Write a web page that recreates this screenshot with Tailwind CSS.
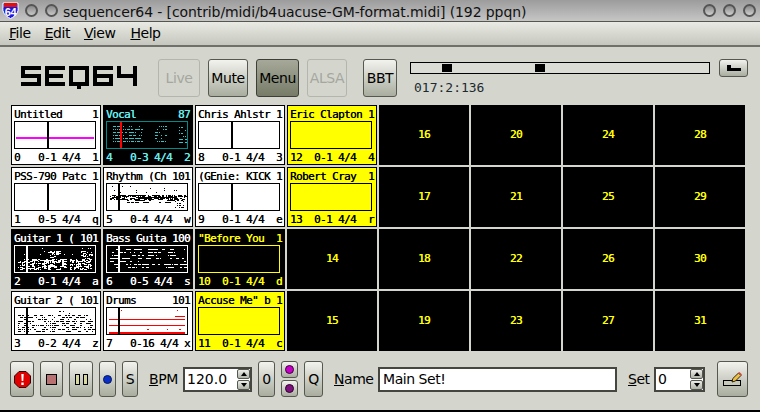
<!DOCTYPE html>
<html lang="en">
<head>
  <meta charset="UTF-8">
  <title>sequencer64</title>
  <script src="https://cdn.jsdelivr.net/npm/@tailwindcss/browser@4"></script>
</head>
<body class="bg-[#d4d6ce] font-['DejaVu_Sans',sans-serif] text-[14px] tracking-[-0.45px] text-black overflow-hidden">
  <div class="w-[760px] h-[412px] flex flex-col">

    <!-- title bar -->
    <div class="h-[22px] flex items-center bg-gradient-to-b from-[#9c9c9c] to-[#c6c6c6] border-b border-[#55574f] shrink-0">
      <svg class="ml-[2px] w-[17px] h-[17px]" viewBox="0 0 17 17">
        <path d="M1 1h15v4c1 5-2 9-7.500 11.500C3 14 0 10 1 5z" fill="#1a1ae0" stroke="#fff"/>
        <path d="M2 1h13v4H2z" fill="#e01010"/>
        <text x="8.500" y="14" text-anchor="middle" font-size="11" font-weight="bold" fill="#fff" font-family="Liberation Sans">64</text>
      </svg>
      <div class="ml-[6px] w-[13px] h-[13px] rounded-full border-2 border-[#555] bg-gradient-to-b from-[#8a8a8a] to-[#c8c8c8]"></div>
      <div class="ml-[7px] w-[13px] h-[13px] rounded-full border-2 border-[#555] bg-gradient-to-b from-[#8a8a8a] to-[#c8c8c8]"></div>
      <div class="ml-[5px] pt-[3px] text-[14px] tracking-[-0.1px] text-[#111] whitespace-pre">sequencer64 - [contrib/midi/b4uacuse-GM-format.midi] (192 ppqn)</div>
      <div class="ml-auto mr-[4px] flex gap-[7px]">
        <div class="w-[13px] h-[13px] rounded-full border-2 border-[#555] bg-gradient-to-b from-[#8a8a8a] to-[#d0d0d0]"></div>
        <div class="w-[13px] h-[13px] rounded-full border-2 border-[#555] bg-gradient-to-b from-[#8a8a8a] to-[#d0d0d0]"></div>
        <div class="w-[13px] h-[13px] rounded-full border-2 border-[#555] bg-gradient-to-b from-[#8a8a8a] to-[#d0d0d0]"></div>
      </div>
    </div>

    <!-- menu bar -->
    <div class="h-[25px] flex items-center pl-[9px] gap-[14px] bg-gradient-to-b from-[#e8eae3] to-[#c6c8c0] border-b-2 border-[#6f716a] shrink-0">
      <span><u>F</u>ile</span><span><u>E</u>dit</span><span><u>V</u>iew</span><span class="ml-[1px]"><u>H</u>elp</span>
    </div>

    <!-- top toolbar -->
    <div class="h-[38px] mt-[12px] flex items-start shrink-0">
      <svg class="ml-[21px] mt-[7px] w-[116px] h-[23px] shrink-0" viewBox="0 0 116 23" role="img" aria-label="SEQ64">
        <g fill="#000">
          <rect x="0" y="0" width="20" height="4"/><rect x="0" y="4" width="4" height="4"/><rect x="0" y="8" width="20" height="4"/><rect x="16" y="12" width="4" height="4"/><rect x="0" y="16" width="20" height="4"/>
          <rect x="24" y="0" width="20" height="4"/><rect x="24" y="4" width="4" height="12"/><rect x="28" y="8" width="14" height="4"/><rect x="24" y="16" width="20" height="4"/>
          <rect x="48" y="0" width="20" height="4"/><rect x="48" y="4" width="4" height="12"/><rect x="64" y="4" width="4" height="12"/><rect x="48" y="16" width="20" height="4"/><rect x="56" y="20" width="4" height="3"/>
          <rect x="72" y="0" width="20" height="4"/><rect x="72" y="4" width="4" height="12"/><rect x="76" y="8" width="16" height="4"/><rect x="88" y="12" width="4" height="4"/><rect x="72" y="16" width="20" height="4"/>
          <rect x="96" y="0" width="4" height="12"/><rect x="100" y="8" width="16" height="4"/><rect x="112" y="0" width="4" height="20"/>
        </g>
      </svg>
      <button class="ml-[21px] w-[42px] h-[38px] rounded-[3px] border border-[#b4b6ae] text-[#a5a79f]">Live</button>
      <button class="ml-[8px] w-[40px] h-[38px] rounded-[3px] border border-[#55584f] bg-gradient-to-b from-[#f2f3ee] to-[#a9ad9f]">Mute</button>
      <button class="ml-[8px] w-[43px] h-[38px] rounded-[3px] border border-[#3c3e37] bg-gradient-to-b from-[#a6a999] to-[#777c69]">Menu</button>
      <button class="ml-[8px] w-[40px] h-[38px] rounded-[3px] border border-[#b4b6ae] text-[#a5a79f]">ALSA</button>
      <button class="ml-[16px] w-[34px] h-[38px] rounded-[3px] border border-[#55584f] bg-gradient-to-b from-[#f2f3ee] to-[#a9ad9f]">BBT</button>
      <div class="ml-[13px] w-[300px] shrink-0">
        <div class="relative h-[12px] mt-[3px] border border-black bg-[#dcdcd6]">
          <div class="absolute left-[31px] top-[1px] w-[10px] h-[8px] bg-black"></div>
          <div class="absolute left-[124px] top-[1px] w-[10px] h-[8px] bg-black"></div>
        </div>
        <div class="ml-[4px] mt-[6px] font-['DejaVu_Sans_Mono',monospace] text-[13px] tracking-normal leading-[16px] text-[#1c2a30]">017:2:136</div>
      </div>
      <button class="ml-[9px] w-[29px] h-[18px] flex items-center justify-center rounded-[3px] border border-[#55584f] bg-gradient-to-b from-[#f2f3ee] to-[#a9ad9f]">
        <svg class="w-[14px] h-[6px]" viewBox="0 0 14 6"><path d="M0 0h4v3h10v3H0z" fill="#000"/></svg>
      </button>
    </div>

    <!-- pattern grid, filled in by the script below -->
    <div id="grid" class="ml-[11px] mt-[8px] w-[734px] h-[246px] grid grid-flow-col grid-cols-[repeat(8,90px)] grid-rows-[repeat(4,60px)] gap-[2px] font-['DejaVu_Sans_Mono',monospace] text-[11px] tracking-[-0.62px] [text-shadow:0.3px_0_currentColor] shrink-0"></div>

    <!-- bottom toolbar -->
    <div class="h-[36px] mt-[10px] flex items-center shrink-0">
      <button class="ml-[10px] w-[24px] h-[36px] flex items-center justify-center rounded-[3px] border border-[#55584f] bg-gradient-to-b from-[#f2f3ee] to-[#a9ad9f]">
        <svg class="w-[17px] h-[17px]" viewBox="0 0 17 17"><path d="M5 .500h7L16.500 5v7L12 16.500H5L.500 12V5z" fill="#e00000" stroke="#300"/><path d="M7.300 3h2.400l-.4 7H7.700zM7.300 11.500h2.400v2.400H7.300z" fill="#fff"/></svg>
      </button>
      <button class="ml-[6px] w-[23px] h-[36px] flex items-center justify-center rounded-[3px] border border-[#55584f] bg-gradient-to-b from-[#f2f3ee] to-[#a9ad9f]">
        <div class="w-[11px] h-[11px] border border-black bg-[#b87272]"></div>
      </button>
      <button class="ml-[6px] w-[24px] h-[36px] flex items-center justify-center gap-[3px] rounded-[3px] border border-[#55584f] bg-gradient-to-b from-[#f2f3ee] to-[#a9ad9f]">
        <div class="w-[5px] h-[11px] border border-black bg-[#d6d8a0]"></div>
        <div class="w-[5px] h-[11px] border border-black bg-[#d6d8a0]"></div>
      </button>
      <button class="ml-[6px] w-[17px] h-[36px] flex items-center justify-center rounded-[3px] border border-[#55584f] bg-gradient-to-b from-[#f2f3ee] to-[#a9ad9f]">
        <div class="w-[9px] h-[9px] rounded-full bg-[#0a2fc8] border border-[#08185a]"></div>
      </button>
      <button class="ml-[6px] w-[16px] h-[36px] rounded-[3px] border border-[#55584f] bg-gradient-to-b from-[#f2f3ee] to-[#a9ad9f]">S</button>
      <span class="ml-[11px] w-[34px]"><u>B</u>PM</span>
      <div class="w-[69px] h-[25px] flex items-center border-2 border-[#44463f] bg-white">
        <span class="ml-[2px] tracking-normal w-[50px]">120.0</span>
        <div class="flex flex-col gap-[1px]">
          <div class="w-[13px] h-[10px] flex items-center justify-center rounded-[2px] border border-[#55584f] bg-gradient-to-b from-[#eceee8] to-[#b0b3a7]"><div class="w-0 h-0 border-x-[3px] border-x-transparent border-b-[4px] border-b-black"></div></div>
          <div class="w-[13px] h-[10px] flex items-center justify-center rounded-[2px] border border-[#55584f] bg-gradient-to-b from-[#eceee8] to-[#b0b3a7]"><div class="w-0 h-0 border-x-[3px] border-x-transparent border-t-[4px] border-t-black"></div></div>
        </div>
      </div>
      <button class="ml-[6px] w-[17px] h-[36px] rounded-[3px] border border-[#55584f] bg-gradient-to-b from-[#f2f3ee] to-[#a9ad9f]">0</button>
      <div class="ml-[6px] w-[17px] h-[36px] flex flex-col justify-between">
        <button class="h-[17px] flex items-center justify-center rounded-[3px] border border-[#55584f] bg-gradient-to-b from-[#f2f3ee] to-[#a9ad9f]"><div class="w-[9px] h-[9px] rounded-full bg-[#c400c4] border border-[#400040]"></div></button>
        <button class="h-[17px] flex items-center justify-center rounded-[3px] border border-[#55584f] bg-gradient-to-b from-[#f2f3ee] to-[#a9ad9f]"><div class="w-[9px] h-[9px] rounded-full bg-[#7c107c] border border-[#300030]"></div></button>
      </div>
      <button class="ml-[6px] w-[19px] h-[36px] rounded-[3px] border border-[#55584f] bg-gradient-to-b from-[#f2f3ee] to-[#a9ad9f]">Q</button>
      <span class="ml-[11px] w-[44px]"><u>N</u>ame</span>
      <div class="w-[239px] h-[25px] flex items-center pl-[3px] border-2 border-[#44463f] bg-white">Main Set!</div>
      <span class="ml-[11px] w-[26px]"><u>S</u>et</span>
      <div class="w-[51px] h-[25px] flex items-center border-2 border-[#44463f] bg-white">
        <span class="ml-[2px] w-[32px]">0</span>
        <div class="flex flex-col gap-[1px]">
          <div class="w-[13px] h-[10px] flex items-center justify-center rounded-[2px] border border-[#55584f] bg-gradient-to-b from-[#eceee8] to-[#b0b3a7]"><div class="w-0 h-0 border-x-[3px] border-x-transparent border-b-[4px] border-b-black"></div></div>
          <div class="w-[13px] h-[10px] flex items-center justify-center rounded-[2px] border border-[#55584f] bg-gradient-to-b from-[#eceee8] to-[#b0b3a7]"><div class="w-0 h-0 border-x-[3px] border-x-transparent border-t-[4px] border-t-black"></div></div>
        </div>
      </div>
      <button class="ml-[12px] w-[31px] h-[36px] flex items-center justify-center rounded-[3px] border border-[#55584f] bg-gradient-to-b from-[#f2f3ee] to-[#a9ad9f]">
        <svg class="w-[20px] h-[15px]" viewBox="0 0 20 15"><rect x=".5" y="8.500" width="17" height="5" fill="#c8cabc" stroke="#000"/><path d="M9 10l.8-3.500 5.700-5.500 2.500 2.500-5.500 5.500z" fill="#f0c040" stroke="#000" stroke-width=".8"/><path d="M15.500 1l2.500 2.500 1-1L16.500 0z" fill="#e04040"/></svg>
      </button>
    </div>

    <div class="mt-auto h-[2px] bg-black shrink-0"></div>
  </div>

  <script>
    const themes = {
      white:  { cell: "bg-white text-black border-black",   box: "border-black",     line: "#000", note: "#000" },
      vocal:  { cell: "bg-black text-[#66eeee] border-black", box: "border-[#008b8b]", line: "#f00", note: "#30c8c8" },
      armed:  { cell: "bg-black text-white border-black",   box: "border-white",     line: "#fff", note: "#fff" },
      drums:  { cell: "bg-white text-black border-black",   box: "border-black",     line: "#000", note: "#f00" },
      yellow: { cell: "bg-[#ffff00] text-black border-black", box: "border-black",   line: "#000", note: "#000" },
      night:  { cell: "bg-black text-[#ffff00] border-black", box: "border-[#ffff00]", line: "#ff0", note: "#ff0" }
    };

    // name, count, number, range, key, theme, beat line x, notes pattern
    const patterns = [
      ["Untitled", "1", "0", "0-1", "1", "white", 32, "magenta"],
      ["PSS-790 Patc", "1", "1", "0-5", "q", "white", 32, ""],
      ["Guitar 1 (", "101", "2", "0-1", "a", "armed", 11, "guitar1"],
      ["Guitar 2 (", "101", "3", "0-2", "z", "white", 11, "guitar2"],
      ["Vocal", "87", "4", "0-3", "2", "vocal", 13, "vocal"],
      ["Rhythm (Ch", "101", "5", "0-4", "w", "white", 11, "rhythm"],
      ["Bass Guita", "100", "6", "0-5", "s", "armed", 11, "bass"],
      ["Drums", "101", "7", "0-16", "x", "drums", 11, "drums"],
      ["Chris Ahlstr", "1", "8", "0-1", "3", "white", 32, ""],
      ["(GEnie: KICK", "1", "9", "0-1", "e", "white", 32, ""],
      ["\"Before You", "1", "10", "0-1", "d", "night", -1, ""],
      ["Accuse Me\" b", "1", "11", "0-1", "c", "yellow", -1, ""],
      ["Eric Clapton", "1", "12", "0-1", "4", "yellow", -1, ""],
      ["Robert Cray", "1", "13", "0-1", "r", "yellow", -1, ""]
    ];

    let seed = 64;
    function rand() {
      seed = (seed * 1103515245 + 12345) & 0x7fffffff;
      return seed / 0x7fffffff;
    }

    // x1, x2, y1, y2, row step, chance of a note, max note length
    const bands = {
      vocal: [[6,36,4,21,3,.85,2],[48,60,4,21,3,.6,2],[72,80,5,21,3,.6,2]],
      rhythm: [[3,78,11,16,1,.75,4],[3,78,2,10,2,.1,1],[20,78,16,20,2,.45,4],[68,78,17,24,2,.4,2]],
      guitar1: [[3,50,13,24,1,.55,3],[55,76,13,24,1,.55,3],[33,44,5,12,1,.4,3],[66,78,5,14,1,.45,2],[3,78,2,12,3,.08,1]],
      guitar2: [[3,78,7,24,2,.42,3],[40,60,3,10,2,.2,2]],
      bass: [[3,78,3,24,3,.42,4]],
      drums: [[2,78,2,3,1,.05,1],[2,78,24,26,1,1,1],[2,78,17,18,1,1,1],[2,78,11,12,1,1,1],[68,78,8,9,1,1,1],[40,78,21,22,1,.06,2]]
    };

    function notes(name, color) {
      if (name === "magenta") return `<rect x="1" y="15" width="78" height="2" fill="#f0f"/>`;
      let out = "";
      (bands[name] || []).forEach(([x1, x2, y1, y2, step, chance, len]) => {
        for (let y = y1; y < y2; y += step) {
          for (let x = x1; x < x2; x += 2) {
            // chance 1 means an unbroken line
            const w = chance === 1 ? 2 : 1 + Math.floor(rand() * len);
            if (chance === 1 || rand() < chance) out += `<rect x="${x}" y="${y}" width="${w}" height="1" fill="${color}"/>`;
          }
        }
      });
      return out;
    }

    function filledCell(p) {
      const [name, count, num, range, key, themeName, beat, pattern] = p;
      const t = themes[themeName];
      const sig = range.length > 3 ? "4/4 " : "4/4  ";
      const line = beat >= 0 ? `<rect x="${beat}" y="0" width="2" height="26" fill="${t.line}"/>` : "";
      return `<div class="w-[90px] h-[60px] border pl-[2px] pr-[2px] ${t.cell}">
        <div class="h-[15px] leading-[17px] flex justify-between whitespace-pre"><span>${name}</span><span>${count}</span></div>
        <div class="w-[82px] h-[28px] border ${t.box}"><svg class="w-[80px] h-[26px]" viewBox="0 0 80 26">${notes(pattern, t.note)}${line}</svg></div>
        <div class="h-[15px] leading-[17px] whitespace-pre">${num.padEnd(4)}${range} ${sig}${key}</div>
      </div>`;
    }

    const grid = document.getElementById("grid");
    let html = patterns.map(filledCell).join("");
    for (let n = 14; n < 32; n++) {
      html += `<div class="w-[90px] h-[60px] bg-black text-[#ffff00] flex items-center justify-center">${n}</div>`;
    }
    grid.innerHTML = html;
  </script>
</body>
</html>
